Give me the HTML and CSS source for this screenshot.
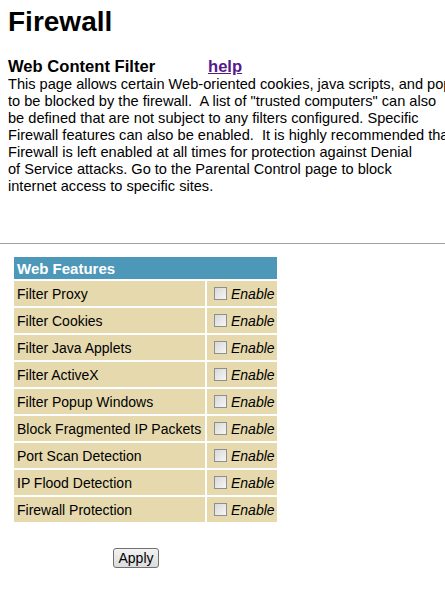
FILE: index.html
```html
<!DOCTYPE html>
<html>
<head>
<meta charset="utf-8">
<title>Firewall</title>
<link rel="stylesheet" href="styles.css">
</head>
<body>
<div class="top">
  <h1 class="title">Firewall</h1>
  <div class="subhead">
    <span class="subtitle">Web Content Filter</span>
    <a class="help" href="#">help</a>
  </div>
  <p class="intro">This page allows certain Web-oriented cookies, java scripts, and pop-up windows<br>to be blocked by the firewall.&nbsp; A list of "trusted computers" can also<br>be defined that are not subject to any filters configured. Specific<br>Firewall features can also be enabled.&nbsp; It is highly recommended that the<br>Firewall is left enabled at all times for protection against Denial<br>of Service attacks. Go to the Parental Control page to block<br>internet access to specific sites.</p>
</div>
<hr class="rule">
<table class="features">
  <tr><th colspan="2">Web Features</th></tr>
  <tr><td class="name">Filter Proxy</td><td class="opt"><input type="checkbox"><i>Enable</i></td></tr>
  <tr><td class="name">Filter Cookies</td><td class="opt"><input type="checkbox"><i>Enable</i></td></tr>
  <tr><td class="name">Filter Java Applets</td><td class="opt"><input type="checkbox"><i>Enable</i></td></tr>
  <tr><td class="name">Filter ActiveX</td><td class="opt"><input type="checkbox"><i>Enable</i></td></tr>
  <tr><td class="name">Filter Popup Windows</td><td class="opt"><input type="checkbox"><i>Enable</i></td></tr>
  <tr><td class="name">Block Fragmented IP Packets</td><td class="opt"><input type="checkbox"><i>Enable</i></td></tr>
  <tr><td class="name">Port Scan Detection</td><td class="opt"><input type="checkbox"><i>Enable</i></td></tr>
  <tr><td class="name">IP Flood Detection</td><td class="opt"><input type="checkbox"><i>Enable</i></td></tr>
  <tr><td class="name">Firewall Protection</td><td class="opt"><input type="checkbox"><i>Enable</i></td></tr>
</table>
<div class="actions">
  <button class="apply" type="button">Apply</button>
</div>
</body>
</html>
```

FILE: styles.css
```css
html, body {
  margin: 0;
  padding: 0;
  background: #fff;
  overflow: hidden;
}
body {
  font-family: "Liberation Sans", Arial, sans-serif;
  color: #000;
}
.top {
  padding: 6px 0 0 8px;
  white-space: nowrap;
  overflow: hidden;
}
.title {
  font-size: 28px;
  font-weight: bold;
  margin: 0;
  line-height: 32px;
}
.subhead {
  margin-top: 20px;
  display: flex;
  align-items: baseline;
  line-height: 18px;
}
.subtitle {
  font-size: 16.6px;
  font-weight: bold;
  width: 200px;
}
.help {
  font-size: 16.6px;
  font-weight: bold;
  color: #551a8b;
  text-decoration: underline;
}
.intro {
  margin: 0;
  font-size: 14.6px;
  line-height: 17px;
}
.rule {
  margin: 48px 0 0 0;
  border: 0;
  border-top: 1px solid #a0a0a0;
  height: 0;
}
.features {
  margin: 11px 0 0 12px;
  border-spacing: 2px;
  width: 267px;
  font-size: 14px;
}
.features th {
  background: #4d97b8;
  color: #fff;
  text-align: left;
  height: 22px;
  padding: 0 0 0 3px;
  font-size: 15px;
}
.features td {
  background: #e6d9ae;
  height: 25px;
  padding: 0 0 0 3px;
}
.features td.name {
  width: 188px;
}
.features td.opt {
  padding-left: 7px;
  white-space: nowrap;
}
.features input {
  -webkit-appearance: none;
  appearance: none;
  margin: 0 4px 0 0;
  width: 13px;
  height: 13px;
  box-sizing: border-box;
  border: 1px solid #8e8f8f;
  background: linear-gradient(135deg, #d8d8d8, #f6f6f6);
  vertical-align: -1px;
}
.features i {
  font-size: 14px;
}
.actions {
  padding: 24px 0 0 113px;
}
.apply {
  font-family: "Liberation Sans", Arial, sans-serif;
  font-size: 14px;
  height: 20px;
  width: 46px;
  padding: 0;
  border: 1px solid #707070;
  border-radius: 3px;
  background: linear-gradient(#f2f2f2, #dcdcdc);
  color: #000;
}
```
